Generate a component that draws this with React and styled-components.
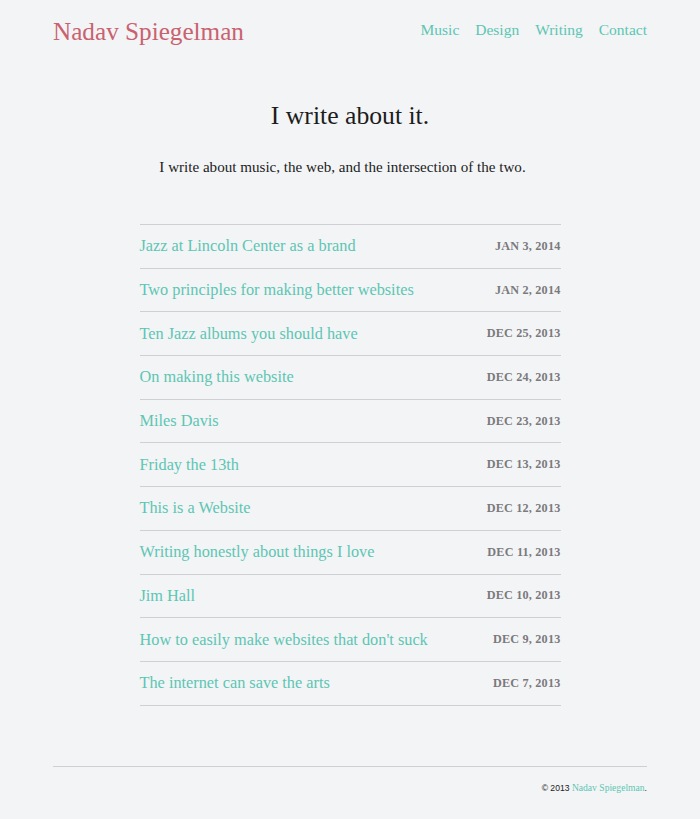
import React from "react";
import styled, { createGlobalStyle } from "styled-components";

const Global = createGlobalStyle`
  html, body { margin: 0; padding: 0; background: #f3f4f6; }
  body { font-family: "Liberation Serif", "Times New Roman", serif; color: #222; }
  a { text-decoration: none; }
`;

const Page = styled.div`
  width: 594px;
  margin: 0 auto;
  padding: 0 53px;
`;

const Header = styled.header`
  display: flex;
  justify-content: space-between;
  align-items: center;
  padding-top: 10px;
  height: 40px;
`;

const Brand = styled.a`
  color: #c9626f;
  font-size: 25.2px;
  margin-top: 4px;
`;

const Nav = styled.nav`
  display: flex;
  gap: 16px;
`;

const NavLink = styled.a`
  color: #5cc6b3;
  font-size: 15.5px;
`;

const Intro = styled.section`
  text-align: center;
  padding-top: 49px;
`;

const Title = styled.h1`
  margin: 0;
  font-weight: normal;
  font-size: 25.7px;
  color: #1c1c1c;
  line-height: 34px;
`;

const Lead = styled.p`
  margin: 23px 0 0;
  padding-right: 15px;
  font-size: 15.1px;
  color: #1c1c1c;
  line-height: 22px;
`;

const List = styled.ul`
  list-style: none;
  margin: 46px auto 0;
  padding: 0;
  width: 421px;
  border-top: 1px solid #cfd0d3;
`;

const Row = styled.li`
  display: flex;
  justify-content: space-between;
  align-items: center;
  height: 42.7px;
  border-bottom: 1px solid #cfd0d3;
`;

const PostLink = styled.a`
  color: #5cc6b3;
  font-size: 16.3px;
`;

const PostDate = styled.span`
  color: #7a7a7c;
  font-size: 12.2px;
  font-weight: bold;
  letter-spacing: 0.2px;
`;

const Footer = styled.footer`
  margin-top: 60px;
  border-top: 1px solid #cfd0d3;
  padding-top: 15px;
  text-align: right;
  font-size: 8.6px;
  color: #222;
  font-family: "Liberation Sans", Arial, sans-serif;
`;

const FooterLink = styled.a`
  color: #5cc6b3;
  font-family: "Liberation Serif", serif;
  font-size: 9.6px;
`;

const posts = [
  ["Jazz at Lincoln Center as a brand", "JAN 3, 2014"],
  ["Two principles for making better websites", "JAN 2, 2014"],
  ["Ten Jazz albums you should have", "DEC 25, 2013"],
  ["On making this website", "DEC 24, 2013"],
  ["Miles Davis", "DEC 23, 2013"],
  ["Friday the 13th", "DEC 13, 2013"],
  ["This is a Website", "DEC 12, 2013"],
  ["Writing honestly about things I love", "DEC 11, 2013"],
  ["Jim Hall", "DEC 10, 2013"],
  ["How to easily make websites that don't suck", "DEC 9, 2013"],
  ["The internet can save the arts", "DEC 7, 2013"],
];

export default function App() {
  return (
    <Page>
      <Global />
      <Header>
        <Brand href="#">Nadav Spiegelman</Brand>
        <Nav>
          <NavLink href="#">Music</NavLink>
          <NavLink href="#">Design</NavLink>
          <NavLink href="#">Writing</NavLink>
          <NavLink href="#">Contact</NavLink>
        </Nav>
      </Header>
      <Intro>
        <Title>I write about it.</Title>
        <Lead>I write about music, the web, and the intersection of the two.</Lead>
      </Intro>
      <List>
        {posts.map(([t, d]) => (
          <Row key={t}>
            <PostLink href="#">{t}</PostLink>
            <PostDate>{d}</PostDate>
          </Row>
        ))}
      </List>
      <Footer>
        © 2013 <FooterLink href="#">Nadav Spiegelman</FooterLink>.
      </Footer>
    </Page>
  );
}
